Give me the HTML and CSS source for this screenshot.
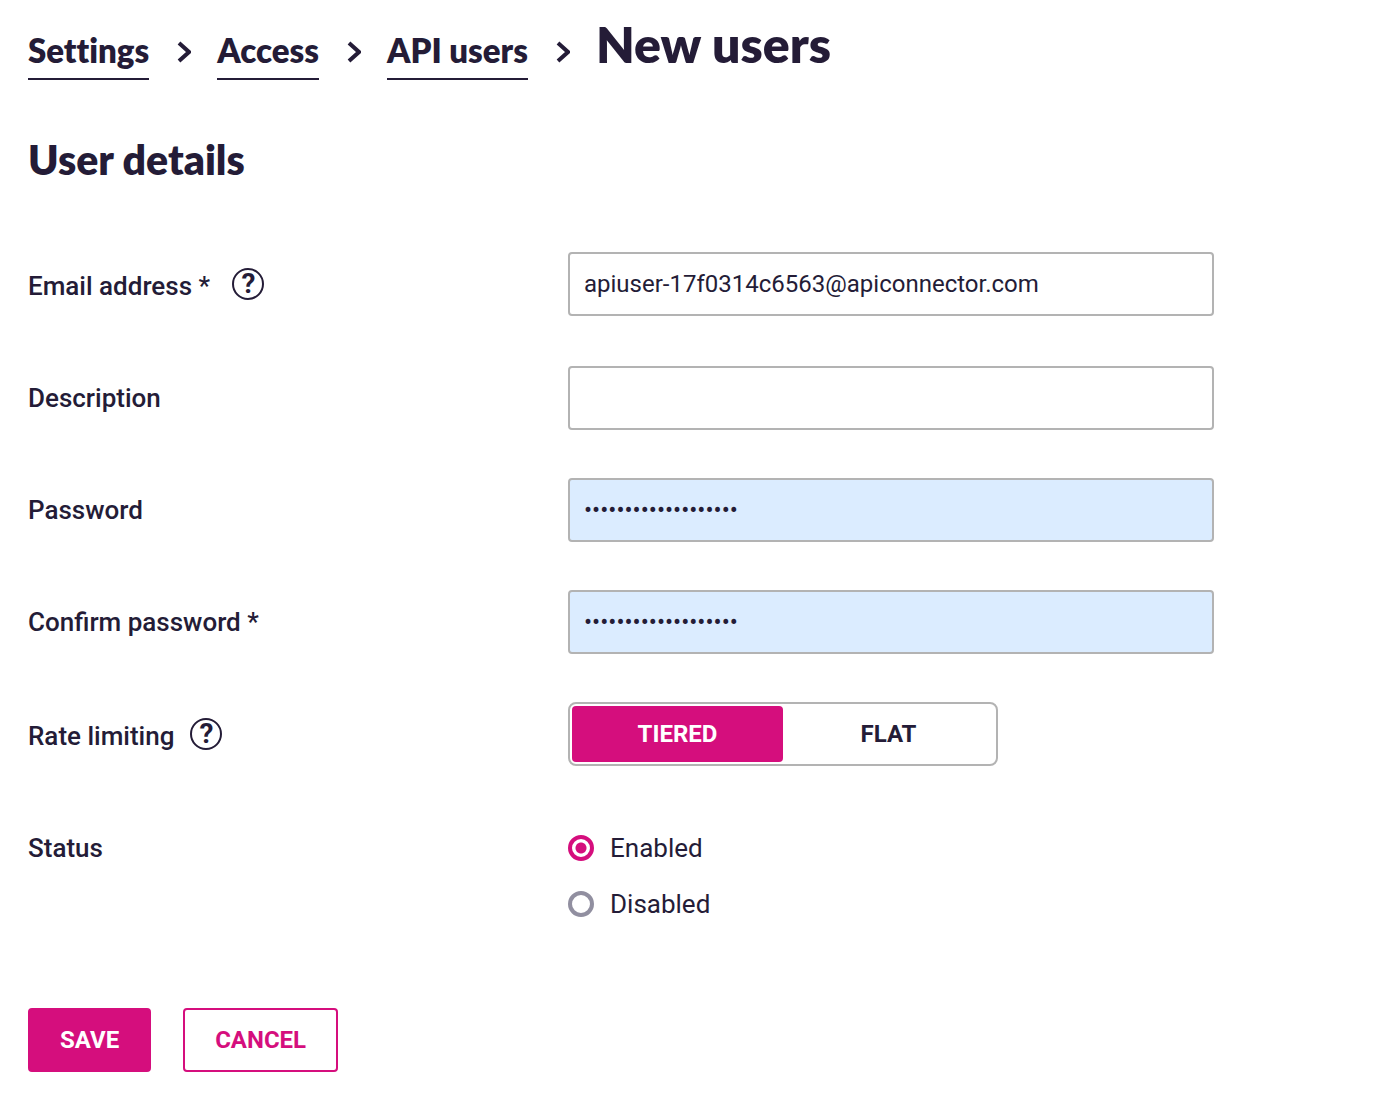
FILE: index.html
```html
<!DOCTYPE html>
<html lang="en">
<head>
<meta charset="utf-8">
<meta name="viewport" content="width=device-width, initial-scale=1">
<title>New users</title>
<link rel="stylesheet" href="styles.css">
</head>
<body>
<main class="page">
  <nav class="breadcrumb" aria-label="Breadcrumb">
    <a class="breadcrumb-link" href="#settings">Settings</a>
    <svg class="chevron" viewBox="0 0 16 22" aria-hidden="true"><path d="M4 2l10 9-10 9"/></svg>
    <a class="breadcrumb-link" href="#access">Access</a>
    <svg class="chevron" viewBox="0 0 16 22" aria-hidden="true"><path d="M4 2l10 9-10 9"/></svg>
    <a class="breadcrumb-link" href="#api-users">API users</a>
    <svg class="chevron" viewBox="0 0 16 22" aria-hidden="true"><path d="M4 2l10 9-10 9"/></svg>
    <h1 class="title">New users</h1>
  </nav>

  <h2 class="section-title">User details</h2>

  <form class="form">
    <div class="row">
      <div class="row-label row-label-help">
        <label for="email">Email address *&nbsp;</label>
        <button class="help" type="button" aria-label="Help with email address">?</button>
      </div>
      <input class="input" id="email" type="text" value="apiuser-17f0314c6563@apiconnector.com">
    </div>
    <div class="row">
      <div class="row-label"><label for="description">Description</label></div>
      <input class="input" id="description" type="text">
    </div>
    <div class="row">
      <div class="row-label"><label for="password">Password</label></div>
      <input class="input input-filled" id="password" type="password" value="abcdefghijklmnopqrs">
    </div>
    <div class="row">
      <div class="row-label"><label for="confirm">Confirm password *</label></div>
      <input class="input input-filled" id="confirm" type="password" value="abcdefghijklmnopqrs">
    </div>
    <div class="row">
      <div class="row-label row-label-help">
        <span id="rate-label">Rate limiting</span>
        <button class="help" type="button" aria-label="Help with rate limiting">?</button>
      </div>
      <div class="toggle" role="group" aria-labelledby="rate-label">
        <button class="toggle-option toggle-option-active" type="button" aria-pressed="true">TIERED</button>
        <button class="toggle-option" type="button" aria-pressed="false">FLAT</button>
      </div>
    </div>
    <div class="row">
      <div class="row-label"><span id="status-label">Status</span></div>
      <div class="radios" role="radiogroup" aria-labelledby="status-label">
        <label class="radio"><input class="radio-input" type="radio" name="status" checked>Enabled</label>
        <label class="radio"><input class="radio-input" type="radio" name="status">Disabled</label>
      </div>
    </div>
    <div class="actions">
      <button class="button button-primary" type="button">SAVE</button>
      <button class="button" type="button">CANCEL</button>
    </div>
  </form>
</main>
</body>
</html>
```
FILE: styles.css
```css
:root {
  --ink: #241c37;
  --pink: #d50e7d;
  --border: #b3b3b3;
}

* {
  box-sizing: border-box;
}

body {
  margin: 0;
  background: #fff;
  color: var(--ink);
  font-family: Roboto, "Liberation Sans", sans-serif;
  font-size: 26px;
  line-height: 36px;
}

button,
input {
  margin: 0;
  color: inherit;
  font-family: inherit;
}

.page {
  padding: 16px 28px 28px;
}

.breadcrumb {
  display: flex;
  flex-wrap: wrap;
  align-items: baseline;
  column-gap: 26px;
  font-family: Lato, "Open Sans", sans-serif;
  font-weight: 800;
  font-variant-ligatures: none;
}

.breadcrumb-link {
  padding-bottom: 8px;
  border-bottom: 2px solid var(--ink);
  color: inherit;
  font-size: 33px;
  line-height: 40px;
  text-decoration: none;
}

.chevron {
  width: 16px;
  height: 22px;
  fill: none;
  stroke: var(--ink);
  stroke-width: 4;
}

.title {
  margin: 0;
  font-size: 50px;
  font-weight: 800;
  line-height: 56px;
}

.section-title {
  margin: 56px 0 0;
  font-family: Lato, "Open Sans", sans-serif;
  font-size: 41px;
  font-weight: 800;
  line-height: 48px;
}

.form {
  display: flex;
  flex-direction: column;
  gap: 48px;
  margin-top: 68px;
}

.row {
  display: grid;
  grid-template-columns: 540px minmax(0, 646px);
  align-items: start;
}

.row-label {
  display: flex;
  align-items: flex-start;
  gap: 16px;
  padding: 14px 0;
  font-weight: 500;
}

.row-label-help {
  padding-top: 16px;
}

.help {
  width: 32px;
  height: 32px;
  padding: 0;
  border: 2px solid var(--ink);
  border-radius: 50%;
  background: none;
  font-size: 28px;
  font-weight: 700;
  line-height: 28px;
}

.input {
  width: 100%;
  height: 64px;
  padding: 0 14px;
  border: 2px solid var(--border);
  border-radius: 4px;
  background: #fff;
  font-size: 24px;
}

.input-filled {
  background: #dbecff;
}

.toggle {
  display: grid;
  grid-template-columns: 1fr 1fr;
  width: 430px;
  max-width: 100%;
  height: 64px;
  padding: 2px;
  border: 2px solid var(--border);
  border-radius: 8px;
}

.toggle-option {
  padding: 0;
  border: 0;
  border-radius: 4px;
  background: none;
  font-size: 24px;
  font-weight: 700;
}

.toggle-option-active {
  background: var(--pink);
  color: #fff;
}

.radios {
  display: flex;
  flex-direction: column;
  align-items: flex-start;
  gap: 20px;
  padding: 14px 0;
}

.radio {
  display: flex;
  align-items: center;
  gap: 16px;
}

.radio-input {
  width: 26px;
  height: 26px;
  margin: 0;
  border: 4px solid #918fa0;
  border-radius: 50%;
  background: #fff;
  appearance: none;
}

.radio-input:checked {
  border-color: var(--pink);
  background: radial-gradient(circle, var(--pink) 5px, #fff 6px);
}

.actions {
  display: flex;
  gap: 32px;
  margin-top: 24px;
}

.button {
  height: 64px;
  padding: 0 30px;
  border: 2px solid var(--pink);
  border-radius: 4px;
  background: #fff;
  color: var(--pink);
  font-size: 24px;
  font-weight: 700;
}

.button-primary {
  background: var(--pink);
  color: #fff;
}

@media (max-width: 900px) {
  .row {
    grid-template-columns: minmax(0, 1fr);
  }
}
```
